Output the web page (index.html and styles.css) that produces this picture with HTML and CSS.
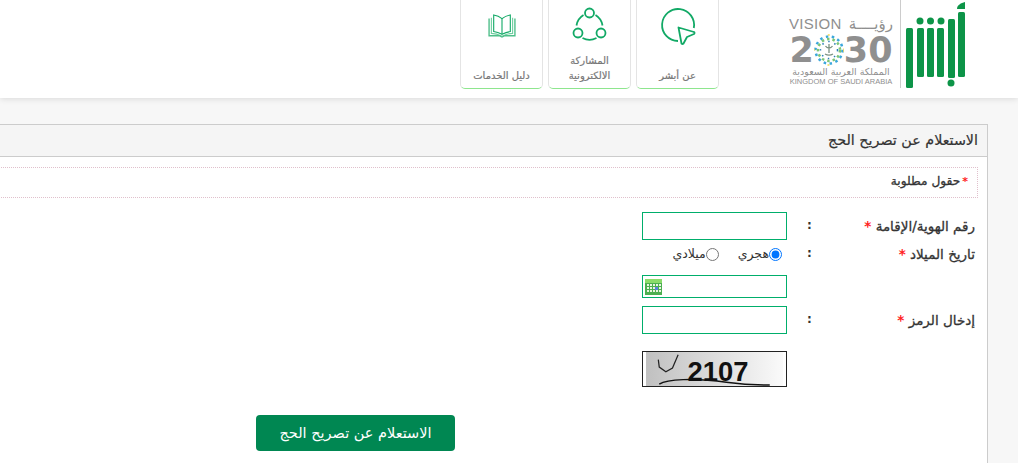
FILE: index.html
```html
<!DOCTYPE html>
<html lang="ar" dir="rtl">

<head>
    <meta charset="utf-8">
    <title>الاستعلام عن تصريح الحج</title>
    <link rel="stylesheet" href="styles.css">
</head>

<body>
    <header class="top-bar">
        <div class="brand">
            <svg class="abshir-logo" width="60" height="88" viewBox="0 0 60 88">
                <g fill="#0d9448">
                    <path d="M51 8 C51 4 55 2 59 1 V8 Z"/>
                    <rect x="52" y="11" width="7" height="65" rx="1.500"/>
                    <rect x="42" y="18" width="7" height="59" rx="1.500"/>
                    <circle cx="45" cy="82" r="3.500"/>
                    <circle cx="14" cy="20" r="3.500"/>
                    <circle cx="24.500" cy="20" r="3.500"/>
                    <circle cx="35" cy="20" r="3.500"/>
                    <rect x="0" y="27" width="7" height="60" rx="1.500"/>
                    <rect x="11" y="27" width="7" height="49" rx="1.500"/>
                    <rect x="21" y="27" width="7" height="49" rx="1.500"/>
                    <rect x="31" y="27" width="7" height="49" rx="1.500"/>
                </g>
            </svg>
            <div class="vision-logo">
                <div class="vision-top"><span>رؤيــــة</span><span>VISION</span></div>
                <div class="vision-year" dir="ltr">
                    <span>2</span>
                    <svg width="30" height="32" viewBox="0 0 30 32">
                        <circle cx="15" cy="16" r="13.500" fill="none" stroke="#3ba7dc" stroke-width="2.500" stroke-dasharray="2.500 3.500"/>
                        <circle cx="15" cy="16" r="11" fill="none" stroke="#7cc576" stroke-width="2.500" stroke-dasharray="2.500 3"/>
                        <circle cx="15" cy="16" r="15" fill="none" stroke="#f2d94e" stroke-width="1.500" stroke-dasharray="2 21"/>
                        <circle cx="15" cy="16" r="8.500" fill="none" stroke="#2a7fb8" stroke-width="1.500" stroke-dasharray="1.500 5"/>
                        <path d="M15 10v9M11.500 12c1 1.500 2.500 2 3.500 2s2.500-.5 3.500-2M11 20c2.500 1.500 5.500 1.500 8 0" stroke="#7b9182" stroke-width="1.300" fill="none"/>
                    </svg>
                    <span>30</span>
                </div>
                <div class="vision-ar">المملكة العربية السعودية</div>
                <div class="vision-en" dir="ltr">KINGDOM OF SAUDI ARABIA</div>
            </div>
        </div>
        <nav class="service-nav">
            <a class="service-card" href="#">
                <svg class="service-icon" width="38" height="38" viewBox="0 0 38 38" fill="none" stroke="#12a966" stroke-width="1.800" stroke-linejoin="round">
                    <path d="M19 34 A16 16 0 1 1 34.800 21"/>
                    <path d="M19.500 20.500 L35 25 Q36 26 35 27 L28 30 L24.500 36.500 Q23.500 37.500 22.500 36.500 Z"/>
                </svg>
                <span>عن أبشر</span>
            </a>
            <a class="service-card" href="#">
                <svg class="service-icon" width="38" height="38" viewBox="0 0 38 38" fill="none" stroke="#12a966" stroke-width="1.800">
                    <circle cx="18.500" cy="6" r="4.500"/>
                    <circle cx="7" cy="26" r="4.500"/>
                    <circle cx="30" cy="26" r="4.500"/>
                    <path d="M24.500 8 A15 15 0 0 1 31.500 18.500"/>
                    <path d="M12.500 8 A15 15 0 0 0 5.500 18.500"/>
                    <path d="M11.500 31 A15 15 0 0 0 25.500 31"/>
                </svg>
                <span>المشاركة<br>الالكترونية</span>
            </a>
            <a class="service-card" href="#">
                <svg class="service-icon service-icon-book" width="28" height="24" viewBox="0 0 30 26" fill="none" stroke="#12a966" stroke-width="1.200">
                    <path d="M15 5 C12 2.500 9 1.500 6 1 V19 C9 19.500 12 20.500 15 22 C18 20.500 21 19.500 24 19 V1 C21 1.500 18 2.500 15 5 Z"/>
                    <path d="M15 5 V22"/>
                    <path d="M3.500 4 V21 C7.500 21 11 22 15 24 C19 22 22.500 21 26.500 21 V4" stroke="#6fcfa0"/>
                    <path d="M1 5 V23.500 H12 L15 25 L18 23.500 H29 V5" stroke="#4fbf8a" stroke-width="1.500"/>
                </svg>
                <span>دليل الخدمات</span>
            </a>
        </nav>
    </header>

    <main class="panel">
        <h2 class="panel-title">الاستعلام عن تصريح الحج</h2>
        <div class="panel-body">
            <div class="required-note"><em>*</em>حقول مطلوبة</div>
            <form class="inquiry-form">
                <label class="field-label">رقم الهوية/الإقامة <em>*</em></label>
                <span class="colon">:</span>
                <div class="field"><input class="text-input" type="text"></div>

                <label class="field-label">تاريخ الميلاد <em>*</em></label>
                <span class="colon">:</span>
                <div class="field radios">
                    <label><input type="radio" name="cal" checked>هجري</label>
                    <label><input type="radio" name="cal">ميلادي</label>
                </div>

                <span></span>
                <span></span>
                <div class="field">
                    <div class="date-input">
                        <svg width="17" height="16" viewBox="0 0 17 16">
                            <rect width="17" height="16" fill="#4caf50"/>
                            <rect width="17" height="4" fill="#8bdc6a"/>
                            <g fill="#e8f5e0">
                                <rect x="2" y="5" width="2" height="2"/><rect x="5" y="5" width="2" height="2"/><rect x="8" y="5" width="2" height="2"/><rect x="11" y="5" width="2" height="2"/><rect x="14" y="5" width="2" height="2"/>
                                <rect x="2" y="8" width="2" height="2"/><rect x="5" y="8" width="2" height="2"/><rect x="8" y="8" width="2" height="2"/><rect x="11" y="8" width="2" height="2"/><rect x="14" y="8" width="2" height="2"/>
                                <rect x="2" y="11" width="2" height="2"/><rect x="5" y="11" width="2" height="2"/><rect x="8" y="11" width="2" height="2"/><rect x="11" y="11" width="2" height="2"/><rect x="14" y="11" width="2" height="2"/>
                            </g>
                            <rect x="10" y="8" width="3" height="3" fill="#5a7fe0"/>
                        </svg>
                    </div>
                </div>

                <label class="field-label">إدخال الرمز <em>*</em></label>
                <span class="colon">:</span>
                <div class="field"><input class="text-input" type="text"></div>

                <span></span>
                <span></span>
                <div class="field">
                    <svg class="captcha" width="145" height="36" viewBox="0 0 145 36">
                        <defs>
                            <linearGradient id="captcha-bg">
                                <stop offset="0" stop-color="#c0c0c0"/>
                                <stop offset="1" stop-color="#fafafa"/>
                            </linearGradient>
                        </defs>
                        <rect width="145" height="36" fill="url(#captcha-bg)"/>
                        <path d="M13 8 L14 16 L21 21 L28 17 L34 3" fill="none" stroke="#222" stroke-width="1.300"/>
                        <path d="M14 34 C22 29 50 27 85 32 C100 34 115 35 131 35" fill="none" stroke="#111" stroke-width="1.500"/>
                        <text class="captcha-text" x="44" y="31" dir="ltr">2107</text>
                    </svg>
                </div>
            </form>
            <div class="form-actions">
                <button class="submit-btn" type="button">الاستعلام عن تصريح الحج</button>
            </div>
        </div>
    </main>
</body>

</html>
```

FILE: styles.css
```css
html,
body {
    height: 100%;
    overflow: hidden;
}

body {
    display: flex;
    flex-direction: column;
    margin: 0;
    background-color: #f7f7f7;
    font-family: "DejaVu Sans", sans-serif;
    color: #333;
}

/* Top bar */
.top-bar {
    display: flex;
    flex-shrink: 0;
    align-items: flex-start;
    height: 98px;
    padding-right: 52px;
    background-color: #fff;
    box-shadow: 0 1px 6px rgba(0, 0, 0, 0.12);
}

.brand {
    display: flex;
    align-items: flex-start;
    margin-left: 70px;
}

.abshir-logo {
    display: block;
    margin-top: 1px;
}

.vision-logo {
    width: 112px;
    height: 88px;
    padding: 14px 7px 0 0;
    margin-right: 5px;
    border-right: 1px solid #ccc;
    box-sizing: border-box;
    color: #8f8f8f;
    text-align: center;
}

.vision-top {
    display: flex;
    justify-content: space-between;
    height: 20px;
    font-size: 15px;
    line-height: 20px;
}

.vision-top span:last-child {
    font-family: "Liberation Sans", sans-serif;
    letter-spacing: 0.3px;
}

.vision-year {
    display: flex;
    align-items: center;
    justify-content: center;
    height: 32px;
    font-size: 35px;
    font-weight: bold;
    line-height: 32px;
}

.vision-ar {
    height: 11px;
    font-size: 9.500px;
    line-height: 11px;
    white-space: nowrap;
}

.vision-en {
    height: 9px;
    font-family: "Liberation Sans", sans-serif;
    font-size: 7.5px;
    line-height: 9px;
    white-space: nowrap;
}

.service-nav {
    display: flex;
    gap: 5px;
}

.service-card {
    display: flex;
    flex-direction: column;
    align-items: center;
    width: 83px;
    height: 89px;
    box-sizing: border-box;
    padding-top: 7px;
    background-color: #fff;
    border: 1px solid #e4e4e4;
    border-top: none;
    border-bottom: 1px solid #8ee68e;
    border-radius: 0 0 5px 5px;
    font-size: 10px;
    line-height: 15px;
    -webkit-text-stroke: 0.2px #777;
    color: #777;
    text-decoration: none;
    text-align: center;
}

.service-icon-book {
    margin-top: 7px;
}

.service-card span {
    margin-top: auto;
    padding-bottom: 5px;
}

/* Panel */
.panel {
    flex: 1;
    margin: 26px 30px 0 -20px;
    background-color: #fff;
    border: 1px solid #ccc;
    border-bottom: none;
}

.panel-title {
    margin: 0;
    height: 31px;
    padding-right: 9px;
    background-color: #f5f5f5;
    border-bottom: 1px solid #ccc;
    font-size: 14.3px;
    font-weight: normal;
    line-height: 31px;
    -webkit-text-stroke: 0.2px #333;
}

.panel-body {
    padding: 10px 9px 0;
}

.required-note {
    height: 29px;
    padding-right: 9px;
    border: 1px dotted #e0c0cc;
    font-size: 12.2px;
    line-height: 27px;
    -webkit-text-stroke: 0.3px #333;
}

.required-note em,
.field-label em {
    font-style: normal;
    font-weight: bold;
    color: #f22;
    -webkit-text-stroke: 0;
}

.required-note em {
    margin-left: 2px;
    font-size: 11px;
}

.inquiry-form {
    display: grid;
    grid-template-columns: 143px 45px 145px;
    grid-template-rows: 28px 35px 31px 45px 36px;
    margin-top: 14px;
    margin-right: 3px;
    align-items: start;
}

.field-label {
    font-size: 13.5px;
    line-height: 28px;
    -webkit-text-stroke: 0.3px #333;
}

.colon {
    font-size: 12px;
    font-weight: bold;
    line-height: 26px;
    text-align: center;
}

.field {
    width: 145px;
}

.text-input {
    display: block;
    width: 145px;
    height: 28px;
    box-sizing: border-box;
    border: 1px solid #00ae6b;
    border-radius: 0;
    outline: none;
    background-color: #fff;
}

.date-input {
    display: flex;
    justify-content: flex-end;
    align-items: center;
    height: 23px;
    padding: 0 2px;
    box-sizing: border-box;
    border: 1px solid #00ae6b;
}

.radios {
    display: flex;
    gap: 19px;
    font-size: 12.5px;
    line-height: 28px;
    white-space: nowrap;
}

.radios input {
    margin: 0;
    vertical-align: middle;
}

.radios label:first-child {
    margin-right: 5px;
}

.captcha {
    display: block;
    box-sizing: border-box;
    border: 1px solid #222;
}

.captcha-text {
    font-family: "Liberation Sans", sans-serif;
    font-size: 29px;
    font-weight: bold;
    fill: #111;
    direction: ltr;
}

.form-actions {
    display: flex;
    margin-top: 28px;
    padding-right: 523px;
}

.submit-btn {
    width: 199px;
    height: 36px;
    background-color: #008752;
    border: none;
    border-radius: 4px;
    color: #fff;
    font-family: inherit;
    font-size: 14.5px;
    cursor: pointer;
}
```
